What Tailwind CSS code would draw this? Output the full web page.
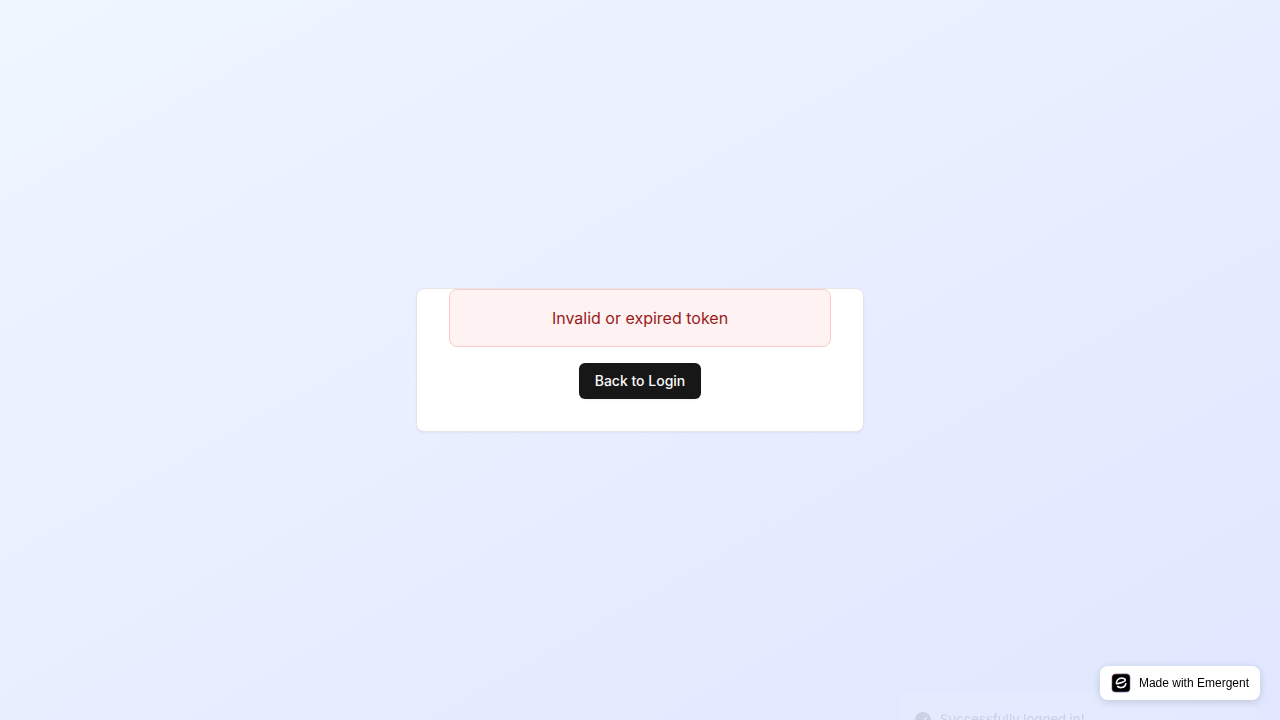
<!DOCTYPE html>
<html lang="en">
<head>
<meta charset="utf-8">
<meta name="viewport" content="width=device-width, initial-scale=1">
<title>Sign in</title>
<script src="https://cdn.jsdelivr.net/npm/@tailwindcss/browser@4"></script>
</head>
<body class="overflow-hidden font-['Inter',sans-serif] antialiased">
<main class="flex min-h-screen items-center justify-center bg-linear-to-br/srgb from-[#eff6ff] to-[#e0e7ff] p-4">
  <section class="w-full max-w-md rounded-lg border border-[#e5e5e5] bg-white px-8 pb-8 shadow-xs">
    <div class="flex flex-col items-center gap-4">
      <p role="alert" class="w-full rounded-lg border border-[#fecaca] bg-[#fef2f2] p-4 text-center text-base text-[#991b1b]">Invalid or expired token</p>
      <button type="button" class="h-9 rounded-md bg-[#171717] px-4 text-sm font-medium text-[#fafafa] shadow-xs">Back to Login</button>
    </div>
  </section>
</main>

<!-- Toast, sliding in from the bottom edge -->
<div role="status" class="fixed top-[calc(100vh-28px)] right-6 flex w-[356px] items-center gap-[7px] rounded-lg border border-[#e5e5e5] bg-white px-3 py-[17px] text-[13px] font-medium text-[#0a0a0a] opacity-10 shadow-lg">
  <svg class="size-5" viewBox="0 0 20 20" fill="currentColor" aria-hidden="true"><path fill-rule="evenodd" clip-rule="evenodd" d="M10 18a8 8 0 100-16 8 8 0 000 16zm3.857-9.809a.75.75 0 00-1.214-.882l-3.483 4.79-1.88-1.88a.75.75 0 10-1.06 1.061l2.5 2.5a.75.75 0 001.137-.089l4-5.5z"/></svg>
  <span>Successfully logged in!</span>
</div>

<a href="#" class="fixed right-5 bottom-5 flex items-center gap-2 rounded-lg bg-white px-[11px] py-[7px] font-['Liberation_Sans',sans-serif] text-xs text-black shadow-[0_2px_8px_rgba(0,0,0,0.15)]">
  <svg class="size-5" viewBox="0 0 20 20" fill="none" aria-hidden="true">
    <defs><linearGradient id="rim" x1="0" y1="0" x2="1" y2="1"><stop stop-color="#d94a72"/><stop offset=".35" stop-color="#202038"/><stop offset="1" stop-color="#4878d8"/></linearGradient></defs>
    <rect x=".6" y=".6" width="18.8" height="18.8" rx="4" fill="url(#rim)" opacity=".6"/>
    <rect x="1.2" y="1.2" width="17.6" height="17.6" rx="3.6" fill="#000"/>
    <path d="M5.4 10.8C5.1 7.5 7.6 5.2 10.6 5.2c2 0 3.5.7 3.7 1.8.2 1.2-1.4 1.9-3.8 2.6L5.4 11M6.2 13.2c1.1 1.1 2.7 1.5 4.2 1.3 2.5-.3 4.3-2.1 4.5-4.4" stroke="#f4f4f4" stroke-width="1.7" stroke-linejoin="round"/>
  </svg>
  <span class="leading-5">Made with Emergent</span>
</a>
</body>
</html>
